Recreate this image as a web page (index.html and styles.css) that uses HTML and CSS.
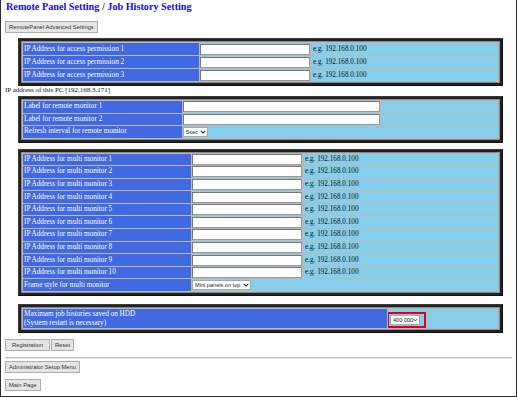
FILE: index.html
```html
<!DOCTYPE html>
<html lang="en">

<head>
    <meta charset="UTF-8">
    <title>Remote Panel Setting / Job History Setting</title>
    <link rel="stylesheet" href="styles.css">
</head>

<body>
    <div class="page">
        <h1 class="title">Remote Panel Setting / Job History Setting</h1>
        <div class="btn-row first">
            <button class="btn">RemotePanel Advanced Settings</button>
        </div>

        <!-- access permission -->
        <div class="frame frame-access">
            <table class="grid">
                <colgroup><col style="width:176px"><col style="width:110px"><col style="width:187px"></colgroup>
                <tr><td class="label">IP Address for access permission 1</td><td class="field"><input type="text"></td><td class="hint">e.g. 192.168.0.100</td></tr>
                <tr><td class="label">IP Address for access permission 2</td><td class="field"><input type="text"></td><td class="hint">e.g. 192.168.0.100</td></tr>
                <tr><td class="label">IP Address for access permission 3</td><td class="field"><input type="text"></td><td class="hint">e.g. 192.168.0.100</td></tr>
            </table>
        </div>

        <p class="note">IP address of this PC [192.168.3.171]</p>

        <!-- remote monitor -->
        <div class="frame frame-monitor">
            <table class="grid">
                <colgroup><col style="width:159px"><col style="width:197px"><col style="width:117px"></colgroup>
                <tr><td class="label">Label for remote monitor 1</td><td class="field"><input type="text"></td><td class="hint"></td></tr>
                <tr><td class="label">Label for remote monitor 2</td><td class="field"><input type="text"></td><td class="hint"></td></tr>
                <tr><td class="label">Refresh interval for remote monitor</td><td class="field" colspan="2">
                    <span class="select sel-sec">5sec<svg class="chev" viewBox="0 0 8 5"><path d="M1 1l3 3 3-3" /></svg></span>
                </td></tr>
            </table>
        </div>

        <!-- multi monitor -->
        <div class="frame frame-multi">
            <table class="grid">
                <colgroup><col style="width:168px"><col style="width:110px"><col style="width:195px"></colgroup>
                <tr><td class="label">IP Address for multi monitor 1</td><td class="field"><input type="text"></td><td class="hint">e.g. 192.168.0.100</td></tr>
                <tr><td class="label">IP Address for multi monitor 2</td><td class="field"><input type="text"></td><td class="hint">e.g. 192.168.0.100</td></tr>
                <tr><td class="label">IP Address for multi monitor 3</td><td class="field"><input type="text"></td><td class="hint">e.g. 192.168.0.100</td></tr>
                <tr><td class="label">IP Address for multi monitor 4</td><td class="field"><input type="text"></td><td class="hint">e.g. 192.168.0.100</td></tr>
                <tr><td class="label">IP Address for multi monitor 5</td><td class="field"><input type="text"></td><td class="hint">e.g. 192.168.0.100</td></tr>
                <tr><td class="label">IP Address for multi monitor 6</td><td class="field"><input type="text"></td><td class="hint">e.g. 192.168.0.100</td></tr>
                <tr><td class="label">IP Address for multi monitor 7</td><td class="field"><input type="text"></td><td class="hint">e.g. 192.168.0.100</td></tr>
                <tr><td class="label">IP Address for multi monitor 8</td><td class="field"><input type="text"></td><td class="hint">e.g. 192.168.0.100</td></tr>
                <tr><td class="label">IP Address for multi monitor 9</td><td class="field"><input type="text"></td><td class="hint">e.g. 192.168.0.100</td></tr>
                <tr><td class="label">IP Address for multi monitor 10</td><td class="field"><input type="text"></td><td class="hint">e.g. 192.168.0.100</td></tr>
                <tr><td class="label">Frame style for multi monitor</td><td class="field" colspan="2">
                    <span class="select sel-frame">Mini panels on top<svg class="chev" viewBox="0 0 8 5"><path d="M1 1l3 3 3-3" /></svg></span>
                </td></tr>
            </table>
        </div>

        <!-- job history -->
        <div class="frame frame-history">
            <table class="grid">
                <colgroup><col style="width:364px"><col style="width:110px"></colgroup>
                <tr class="tall"><td class="label">Maximam job histories saved on HDD<br>(System restart is necessary)</td><td class="field field-low">
                    <div class="mark"><span class="select sel-hist">400,000<svg class="chev" viewBox="0 0 8 5"><path d="M1 1l3 3 3-3" /></svg></span></div>
                </td></tr>
            </table>
        </div>

        <div class="btn-row actions">
            <button class="btn btn-wide">Registration</button>
            <button class="btn">Reset</button>
        </div>
        <hr class="sep">
        <div class="btn-row admin">
            <button class="btn">Administrator Setup Menu</button>
        </div>
        <div class="btn-row last">
            <button class="btn">Main Page</button>
        </div>
    </div>
</body>

</html>
```

FILE: styles.css
```css
html,
body {
    margin: 0;
    background: #fff;
}

body {
    font-family: "Liberation Serif", "Times New Roman", serif;
}

.page {
    box-sizing: border-box;
    width: 517px;
    height: 397px;
    border: 1px solid #2b2b2b;
    border-top: none;
    padding: 0 4px;
    overflow: hidden;
}

.title {
    margin: 0;
    padding-top: 1px;
    padding-left: 1px;
    font-size: 10.2px;
    line-height: 12px;
    font-weight: bold;
    color: #0c0cf0;
}

.btn-row {
    display: flex;
    gap: 1px;
}

.btn-row.first {
    margin-top: 8px;
}

.btn {
    box-sizing: border-box;
    height: 12px;
    padding: 0 3px;
    border: 1px solid #adadad;
    background: #e5e5e5;
    color: #333;
    font-family: "Liberation Sans", Arial, sans-serif;
    font-size: 5.8px;
    line-height: 10px;
}

.btn-wide {
    padding: 0 6px;
}

/* dark boxes around the tables */
.frame {
    margin-left: 13px;
    width: 485px;
    box-sizing: border-box;
    background: #222;
    border: 1px solid #3a3a3a;
    border-right-color: #111;
    border-bottom-color: #111;
    padding: 2px;
}

.frame-access {
    margin-top: 5px;
}

.frame-monitor {
    margin-top: 2px;
}

.frame-multi {
    margin-top: 6px;
}

.frame-history {
    margin-top: 8px;
}

.grid {
    table-layout: fixed;
    border-collapse: separate;
    border-spacing: 1px;
    background: #b9b9b9;
    border: 1px solid #8a8a8a;
    width: 100%;
}

.grid td {
    padding: 0;
    height: 11.6px;
    font-size: 7.2px;
    line-height: 9px;
    white-space: nowrap;
    overflow: hidden;
}

.frame-access .grid td {
    height: 12px;
}

.frame-monitor .grid td {
    height: 11.5px;
}

.grid .tall td {
    height: 19px;
}

.label {
    background: #4169e1;
    color: #fff;
    padding-left: 1px !important;
}

.field,
.hint {
    background: #87ceeb;
}

.field-low {
    vertical-align: bottom;
}

.hint {
    padding-left: 2px !important;
    color: #111;
}

.field input {
    display: block;
    box-sizing: border-box;
    width: 100%;
    height: 11px;
    margin: 0;
    padding: 0;
    border: 1px solid #9a9a9a;
    border-top-color: #777;
    border-left-color: #777;
    background: #fff;
}

/* drop-down look */
.select {
    box-sizing: border-box;
    display: inline-flex;
    align-items: center;
    justify-content: space-between;
    height: 10px;
    padding: 0 1px 0 2px;
    border: 1px solid #a8a8a8;
    background: #fff;
    color: #222;
    font-family: "Liberation Sans", Arial, sans-serif;
    font-size: 5.6px;
    line-height: 8px;
    vertical-align: middle;
}

.chev {
    width: 6px;
    height: 4px;
    fill: none;
    stroke: #222;
    stroke-width: 1.4;
}

.sel-sec {
    width: 25px;
}

.sel-frame {
    width: 59px;
}

.sel-hist {
    width: 30px;
    vertical-align: top;
}

.mark {
    width: fit-content;
    margin-left: -1px;
    padding: 1px 4px 1px 1px;
    border: 2px solid #e0001a;
    line-height: 0;
}

.note {
    margin: 0;
    font-size: 7px;
    line-height: 8px;
    color: #111;
}

.actions {
    margin-top: 6px;
}

.sep {
    margin: 6px 0 0 0;
    border: none;
    border-top: 1px solid #bbb;
    border-bottom: 1px solid #e6e6e6;
    height: 0;
}

.btn-row.admin {
    margin-top: 2px;
}

.btn-row.last {
    margin-top: 6px;
}
```
